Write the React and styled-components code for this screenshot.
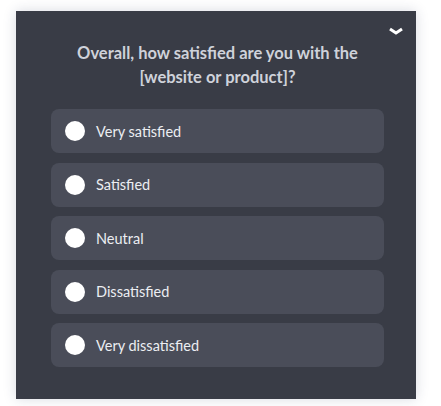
import React from 'react'
import styled, { createGlobalStyle } from 'styled-components';

const GlobalStyle = createGlobalStyle`
  html, body {
    margin: 0;
    padding: 0;
    background: #ffffff;
  }
  body {
    font-family: Lato, "Liberation Sans", sans-serif;
  }
`;

const Page = styled.div`
  padding: 11px 25px 7px 16px;
`;

const Panel = styled.section`
  position: relative;
  width: 400px;
  height: 388px;
  box-sizing: border-box;
  background: #393c46;
  box-shadow: 0 0 12px rgba(40, 50, 90, 0.18);
  padding: 30px 32px 0 35px;
`;

const Collapse = styled.button`
  position: absolute;
  top: 14px;
  right: 12px;
  width: 16px;
  height: 12px;
  padding: 0;
  border: 0;
  background: none;
  display: flex;
  align-items: center;
  justify-content: center;
`;

const Question = styled.h2`
  margin: 0 0 20px;
  font-size: 16.5px;
  line-height: 24px;
  font-weight: 700;
  text-align: center;
  color: #cfd2da;
`;

const Options = styled.div`
  display: flex;
  flex-direction: column;
  gap: 9.5px;
`;

const Option = styled.label`
  display: flex;
  align-items: center;
  gap: 11px;
  height: 44px;
  padding: 0 14px;
  border-radius: 8px;
  background: #4a4d59;
  color: #eceef2;
  font-size: 14.5px;
  cursor: pointer;
`;

const Dot = styled.span`
  width: 20px;
  height: 20px;
  border-radius: 50%;
  background: #ffffff;
  flex-shrink: 0;
`;

const choices = ['Very satisfied', 'Satisfied', 'Neutral', 'Dissatisfied', 'Very dissatisfied'];

const App = () => {
  return (
    <Page>
      <GlobalStyle />
      <Panel>
        <Collapse aria-label="collapse">
          <svg width="14" height="9" viewBox="0 0 14 9">
            <path d="M1 2 L7 6 L13 2" stroke="#ffffff" strokeWidth="3" fill="none" strokeLinejoin="miter" />
          </svg>
        </Collapse>
        <Question>
          Overall, how satisfied are you with the<br />[website or product]?
        </Question>
        <Options>
          {choices.map((c) => (
            <Option key={c}>
              <Dot />
              {c}
            </Option>
          ))}
        </Options>
      </Panel>
    </Page>
  )
}

export default App
